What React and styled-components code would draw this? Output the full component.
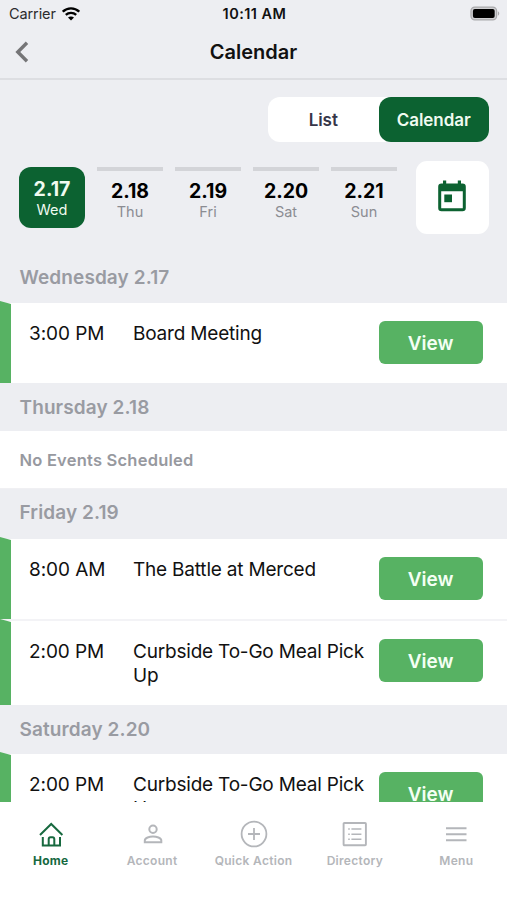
import React, { useState } from 'react';
import styled, { createGlobalStyle } from 'styled-components';

const GlobalStyle = createGlobalStyle`
    * {
        box-sizing: border-box;
    }

    body {
        margin: 0;
        background: #edeef2;
        font-family: Inter, "Liberation Sans", sans-serif;
    }

    button {
        font-family: inherit;
        border: none;
        padding: 0;
        cursor: pointer;
    }
`;

const Screen = styled.div`
    display: flex;
    flex-direction: column;
    width: 507px;
    height: 900px;
    overflow: hidden;
    background: #edeef2;
    color: #111;
`;

const StatusBar = styled.div`
    display: grid;
    grid-template-columns: 1fr auto 1fr;
    align-items: center;
    height: 27px;
    padding: 0 7px 0 9px;
    flex-shrink: 0;
`;

const Carrier = styled.div`
    display: flex;
    align-items: center;
    gap: 6px;
    font-size: 14.5px;
    letter-spacing: -0.1px;
    color: #2b2b2d;
`;

const Clock = styled.div`
    font-size: 14.5px;
    font-weight: 600;
    letter-spacing: 0.45px;
`;

const Battery = styled.div`
    display: flex;
    justify-content: flex-end;
`;

const Header = styled.header`
    display: grid;
    grid-template-columns: 60px 1fr 60px;
    align-items: center;
    height: 53px;
    padding-bottom: 1px;
    border-bottom: 2px solid #dddee2;
    flex-shrink: 0;
`;

const BackButton = styled.button`
    display: flex;
    background: none;
    padding-left: 15px;
`;

const Title = styled.h1`
    margin: 0;
    text-align: center;
    font-size: 20px;
    font-weight: 600;
    letter-spacing: 0;
`;

const Toggle = styled.div`
    display: flex;
    align-self: flex-end;
    width: 221px;
    height: 45px;
    margin: 17px 18px 0 0;
    border-radius: 12px;
    background: #fff;
    flex-shrink: 0;
`;

const ToggleButton = styled.button`
    flex: 1;
    border-radius: 12px;
    font-size: 17px;
    font-weight: 600;
    letter-spacing: -0.05px;
    background: ${props => (props.$active ? '#0c6231' : 'transparent')};
    color: ${props => (props.$active ? '#f0fbf0' : '#363648')};
`;

const DayStrip = styled.div`
    display: flex;
    height: 73px;
    margin-top: 19px;
    padding: 0 18px 0 19px;
    flex-shrink: 0;
`;

const Days = styled.div`
    display: flex;
    gap: 12px;
    padding-top: 6px;
    flex: 1;
`;

const Day = styled.button`
    display: flex;
    flex-direction: column;
    align-items: center;
    width: 66px;
    height: ${props => (props.$active ? '61px' : '56px')};
    padding-top: ${props => (props.$active ? '10px' : '8px')};
    border-top: ${props => (props.$active ? 'none' : '4px solid #d3d4d8')};
    border-radius: ${props => (props.$active ? '12px' : '0')};
    background: ${props => (props.$active ? '#0c6231' : 'transparent')};
    color: ${props => (props.$active ? '#f0fbf0' : '#000')};
`;

const DayNumber = styled.span`
    font-size: 19.5px;
    font-weight: 700;
    line-height: 25px;
`;

const DayName = styled.span`
    margin-top: -1px;
    font-size: 14.5px;
    line-height: 18px;
    color: ${props => (props.$active ? '#f0fbf0' : '#8b8c92')};
`;

const PickerButton = styled.button`
    display: flex;
    align-items: center;
    justify-content: center;
    width: 73px;
    height: 73px;
    padding: 0 1px 3px 0;
    border-radius: 11px;
    background: #fff;
`;

const Agenda = styled.main`
    flex: 1;
    min-height: 0;
    margin-top: 16px;
    overflow: hidden;
`;

const DateHeading = styled.h2`
    height: ${props => props.$height}px;
    margin: 0;
    padding: ${props => props.$offset}px 0 0 19.5px;
    font-size: 19px;
    font-weight: 600;
    line-height: 24px;
    letter-spacing: 0.1px;
    color: #999ba2;
    background: #edeef2;
`;

const EventRow = styled.div`
    display: flex;
    position: relative;
    height: ${props => props.$height}px;
    padding: 18px 24.5px 0 29px;
    border-bottom: ${props => (props.$divided ? '2px solid #f3f3f6' : 'none')};
    background: #fff;
`;

// the marker pokes slightly above its row and has a slanted top edge
const Marker = styled.span`
    position: absolute;
    left: 0;
    top: -2px;
    bottom: 0;
    width: 11px;
    background: #57b263;
    clip-path: polygon(0 0, 100% 3px, 100% 100%, 0 100%);
`;

const Time = styled.div`
    width: 104px;
    margin-top: 1px;
    font-size: 19px;
    line-height: 24px;
    letter-spacing: -0.08px;
`;

const EventName = styled.div`
    width: 245.5px;
    margin-top: 1px;
    padding-right: 8px;
    font-size: 19px;
    line-height: 24px;
    letter-spacing: -0.2px;
`;

const ViewButton = styled.button`
    width: 104px;
    height: 43px;
    padding-top: 2px;
    border-radius: 6px;
    background: #57b263;
    color: #f4fff4;
    font-size: 19px;
    font-weight: 600;
`;

const EmptyRow = styled.div`
    display: flex;
    align-items: center;
    height: 58px;
    padding: 0 0 0 19.5px;
    border-bottom: 1px solid #f0f0f3;
    background: #fff;
    color: #97999f;
    font-size: 16.5px;
    font-weight: 600;
    letter-spacing: 0.22px;
`;

const TabBar = styled.nav`
    display: flex;
    height: 98px;
    background: #fff;
    flex-shrink: 0;
`;

const Tab = styled.button`
    display: flex;
    flex-direction: column;
    align-items: center;
    flex: 1;
    padding-top: 17px;
    background: none;
    color: ${props => (props.$active ? '#17693f' : '#b4b6ba')};
`;

const TabLabel = styled.span`
    margin-top: 4px;
    font-size: 12px;
    font-weight: ${props => (props.$active ? 700 : 600)};
    line-height: 16px;
    letter-spacing: 0.3px;
    white-space: nowrap;
`;

const WifiIcon = () => (
    <svg width="18" height="14" viewBox="0 0 18 14" fill="none" stroke="#000" strokeWidth="2.3">
        <path d="M0.8 4.7C5.4 0.2 12.6 0.2 17.2 4.7" />
        <path d="M3.8 7.9C6.7 5.1 11.3 5.1 14.2 7.9" />
        <path d="M9 13.6L6 10.6C7.6 9.1 10.4 9.1 12 10.6Z" fill="#000" stroke="none" />
    </svg>
);

const BatteryIcon = () => (
    <svg width="30" height="15" viewBox="0 0 31 15">
        <rect x="1" y="0.8" width="26.5" height="13.4" rx="4" fill="#d0d0d3" stroke="#a9a9ac" strokeWidth="1.3" />
        <rect x="3" y="2.8" width="22.5" height="9.4" rx="2" fill="#000" />
        <path d="M28.9 5.2C30.7 6 30.7 9 28.9 9.8Z" fill="#a9a9ac" />
    </svg>
);

const BackIcon = () => (
    <svg width="14" height="22" viewBox="0 0 14 22" fill="none" stroke="#757577" strokeWidth="3.4">
        <path d="M12 1.8L2.8 11L12 20.2" />
    </svg>
);

const CalendarIcon = () => (
    <svg width="28" height="32" viewBox="0 0 28 32" fill="#0c6231">
        <path d="M5 0.5h3.2v3h11.6v-3H23v3h1.5a3.3 3.3 0 0 1 3.3 3.3V28a3.3 3.3 0 0 1-3.3 3.3h-21A3.3 3.3 0 0 1 0.2 28V6.8a3.3 3.3 0 0 1 3.3-3.3H5zM3.2 11.2v17.1h21.6V11.2z" />
        <rect x="6.3" y="14.5" width="7.7" height="7.7" />
    </svg>
);

const HomeIcon = () => (
    <svg width="32" height="30" viewBox="0 0 32 30" fill="none" stroke="currentColor" strokeWidth="2">
        <path d="M5 16L16.2 5L27.4 16" />
        <path d="M7.8 18V26.4H25V18" />
        <path d="M13.7 26.4V20.2Q13.7 18.2 15.5 18.2H17.5Q19.3 18.2 19.3 20.2V26.4" />
    </svg>
);

const AccountIcon = () => (
    <svg width="32" height="30" viewBox="0 0 32 30" fill="none" stroke="currentColor" strokeWidth="2">
        <circle cx="17" cy="10.3" r="3.7" />
        <path d="M8.8 23.2V21.5C8.8 18.8 13.5 17.6 17 17.6S25.3 18.8 25.3 21.5V23.2Z" />
    </svg>
);

const QuickActionIcon = () => (
    <svg width="32" height="30" viewBox="0 0 32 30" fill="none" stroke="currentColor" strokeWidth="1.8">
        <circle cx="16" cy="15" r="12.4" />
        <path d="M16 9V21M10 15H22" />
    </svg>
);

const DirectoryIcon = () => (
    <svg width="32" height="30" viewBox="0 0 32 30" fill="none" stroke="currentColor" strokeWidth="1.9">
        <rect x="4.6" y="4" width="22.3" height="22.3" rx="0.8" />
        <path d="M9.2 10H10.8M9.2 15.2H10.8M9.2 20.3H10.8M12.4 10H22.4M12.4 15.2H22.4M12.4 20.3H22.4" strokeWidth="1.6" />
    </svg>
);

const MenuIcon = () => (
    <svg width="32" height="30" viewBox="0 0 32 30" fill="none" stroke="currentColor" strokeWidth="2">
        <path d="M6 9.2H26.5M6 15.2H26.5M6 21.2H26.5" />
    </svg>
);

const days = [
    { date: '2.17', name: 'Wed' },
    { date: '2.18', name: 'Thu' },
    { date: '2.19', name: 'Fri' },
    { date: '2.20', name: 'Sat' },
    { date: '2.21', name: 'Sun' }
];

const agenda = [
    {
        title: 'Wednesday 2.17',
        headingHeight: 53,
        headingOffset: 16,
        events: [{ time: '3:00 PM', name: 'Board Meeting', height: 80 }]
    },
    { title: 'Thursday 2.18', headingHeight: 48, headingOffset: 13, events: [] },
    {
        title: 'Friday 2.19',
        headingHeight: 50,
        headingOffset: 12,
        events: [
            { time: '8:00 AM', name: 'The Battle at Merced', height: 82 },
            { time: '2:00 PM', name: 'Curbside To-Go Meal Pick Up', height: 84 }
        ]
    },
    {
        title: 'Saturday 2.20',
        headingHeight: 49,
        headingOffset: 13,
        events: [{ time: '2:00 PM', name: 'Curbside To-Go Meal Pick Up', height: 84 }]
    }
];

const tabs = [
    { label: 'Home', Icon: HomeIcon },
    { label: 'Account', Icon: AccountIcon },
    { label: 'Quick Action', Icon: QuickActionIcon },
    { label: 'Directory', Icon: DirectoryIcon },
    { label: 'Menu', Icon: MenuIcon }
];

const App = () => {
    const [view, setView] = useState('Calendar');
    const [selectedDay, setSelectedDay] = useState('2.17');
    const [tab, setTab] = useState('Home');

    return (
        <Screen>
            <GlobalStyle />
            <StatusBar>
                <Carrier>Carrier <WifiIcon /></Carrier>
                <Clock>10:11 AM</Clock>
                <Battery><BatteryIcon /></Battery>
            </StatusBar>
            <Header>
                <BackButton aria-label="Back"><BackIcon /></BackButton>
                <Title>Calendar</Title>
            </Header>
            <Toggle>
                {['List', 'Calendar'].map(name => (
                    <ToggleButton key={name} $active={view === name} onClick={() => setView(name)}>
                        {name}
                    </ToggleButton>
                ))}
            </Toggle>
            <DayStrip>
                <Days>
                    {days.map(({ date, name }) => (
                        <Day key={date} $active={selectedDay === date} onClick={() => setSelectedDay(date)}>
                            <DayNumber>{date}</DayNumber>
                            <DayName $active={selectedDay === date}>{name}</DayName>
                        </Day>
                    ))}
                </Days>
                <PickerButton aria-label="Pick a date"><CalendarIcon /></PickerButton>
            </DayStrip>
            <Agenda>
                {agenda.map(({ title, headingHeight, headingOffset, events }) => (
                    <section key={title}>
                        <DateHeading $height={headingHeight} $offset={headingOffset}>{title}</DateHeading>
                        {events.length === 0 && <EmptyRow>No Events Scheduled</EmptyRow>}
                        {events.map(({ time, name, height }, index) => (
                            <EventRow key={time} $height={height} $divided={index < events.length - 1}>
                                <Marker />
                                <Time>{time}</Time>
                                <EventName>{name}</EventName>
                                <ViewButton>View</ViewButton>
                            </EventRow>
                        ))}
                    </section>
                ))}
            </Agenda>
            <TabBar>
                {tabs.map(({ label, Icon }) => (
                    <Tab key={label} $active={tab === label} onClick={() => setTab(label)}>
                        <Icon />
                        <TabLabel $active={tab === label}>{label}</TabLabel>
                    </Tab>
                ))}
            </TabBar>
        </Screen>
    );
};

export default App;
